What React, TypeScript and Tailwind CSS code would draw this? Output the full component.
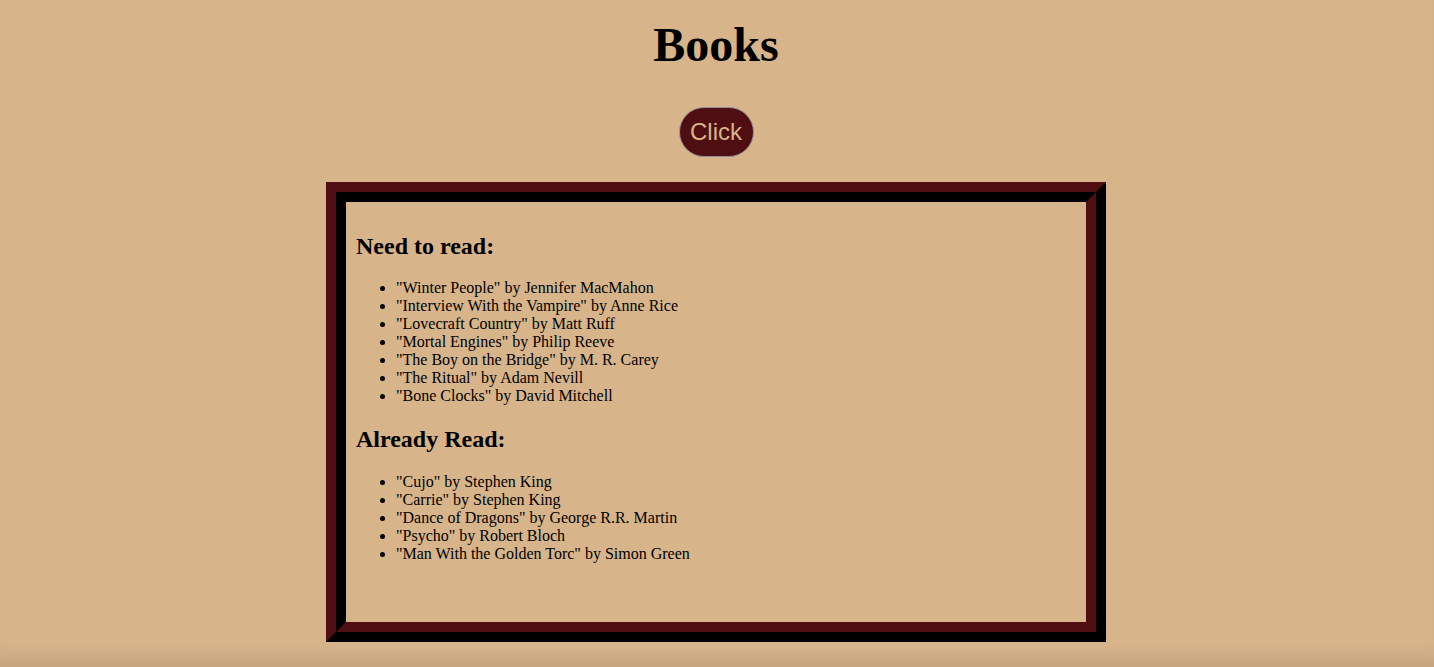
import React from "react";

const needToRead = [
  '"Winter People" by Jennifer MacMahon',
  '"Interview With the Vampire" by Anne Rice',
  '"Lovecraft Country" by Matt Ruff',
  '"Mortal Engines" by Philip Reeve',
  '"The Boy on the Bridge" by M. R. Carey',
  '"The Ritual" by Adam Nevill',
  '"Bone Clocks" by David Mitchell',
];

const alreadyRead = [
  '"Cujo" by Stephen King',
  '"Carrie" by Stephen King',
  '"Dance of Dragons" by George R.R. Martin',
  '"Psycho" by Robert Bloch',
  '"Man With the Golden Torc" by Simon Green',
];

export default function App() {
  return (
    <div
      className="min-h-[667px] w-full pr-[2px] bg-[#d7b48a] text-black flex flex-col items-center shadow-[inset_0_-22px_18px_-14px_rgba(0,0,0,0.10)]"
      style={{ fontFamily: '"Liberation Serif", "Times New Roman", serif' }}
    >
      <h1 className="mt-[18px] text-[48px] leading-[53px] font-bold">Books</h1>
      <button
        className="mt-[36px] w-[75px] h-[50px] rounded-full bg-[#4f0e11] border border-[#9a8c9c] text-[#d9b48a] text-[24px] leading-none flex items-center justify-center"
        style={{ fontFamily: '"Liberation Sans", Arial, sans-serif' }}
      >
        Click
      </button>
      <div className="mt-[25px] w-[780px] h-[460px] border-[10px] border-t-[#4f0e11] border-l-[#4f0e11] border-b-black border-r-black flex">
        <div className="flex-1 border-[10px] border-t-black border-l-black border-b-[#4f0e11] border-r-[#4f0e11] p-[10px]">
          <h2 className="text-[24px] font-bold leading-[26.5px] mt-[21px] mb-[19px]">Need to read:</h2>
          <ul className="list-disc pl-10 text-[16px]">
            {needToRead.map((b) => (
              <li key={b} className="leading-[18px]">{b}</li>
            ))}
          </ul>
          <h2 className="text-[24px] font-bold leading-[26.5px] mt-[21px] mb-[21px]">Already Read:</h2>
          <ul className="list-disc pl-10 text-[16px]">
            {alreadyRead.map((b) => (
              <li key={b} className="leading-[18px]">{b}</li>
            ))}
          </ul>
        </div>
      </div>
    </div>
  );
}
